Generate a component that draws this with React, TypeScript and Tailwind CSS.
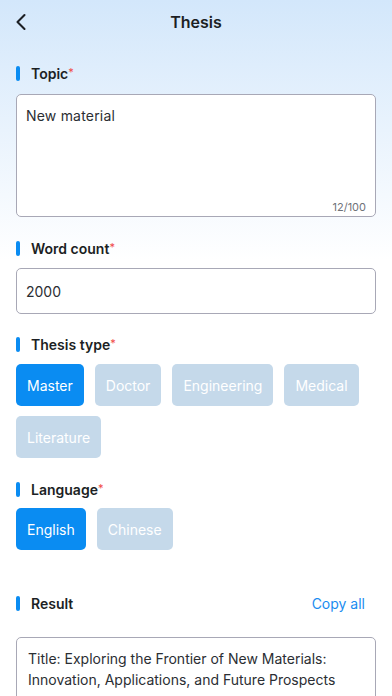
import { ChevronLeft } from "lucide-react";

const types = ["Master", "Doctor", "Engineering", "Medical", "Literature"];
const langs = ["English", "Chinese"];

function Label({ text, required }: { text: string; required?: boolean }) {
  return (
    <div className="flex items-center h-5">
      <span className="w-[4px] h-[15px] rounded-full bg-[#0a8cf2]" />
      <span className="ml-[11px] text-[14px] font-semibold text-[#1c1f24]">{text}</span>
      {required && <span className="text-[#f04848] text-[11px] self-start mt-[1px]">*</span>}
    </div>
  );
}

function Chip({ text, active }: { text: string; active?: boolean }) {
  return (
    <div
      className={
        "h-[42px] px-[11px] rounded-[5px] flex items-center text-[14px] " +
        (active ? "bg-[#0a8cf2] text-white" : "bg-[#c5d9ea] text-white")
      }
    >
      {text}
    </div>
  );
}

export default function App() {
  return (
    <div
      className="min-h-[696px] w-full text-[#1c1f24]"
      style={{ fontFamily: "Inter, 'Noto Sans', sans-serif", backgroundImage: "linear-gradient(to bottom, #d3e7fb 0px, #ffffff 260px, #ffffff 100%)" }}
    >
      <div className="relative h-[44px] flex items-center justify-center">
        <ChevronLeft className="absolute left-[7px] top-[8px] w-[28px] h-[28px]" strokeWidth={1.8} />
        <span className="text-[16px] font-semibold">Thesis</span>
      </div>

      <div className="px-4 pt-[19px]">
        <Label text="Topic" required />
        <div className="mt-[11px] h-[123px] bg-white border border-[#a8a8b6] rounded-[5px] relative px-[9px] pt-[10px]">
          <div className="text-[14px] text-[#2b2e33] tracking-[0.2px]">New material</div>
          <div className="absolute right-[9px] bottom-[1px] text-[11px] text-[#6f7278]">12/100</div>
        </div>

        <div className="mt-[21px]">
          <Label text="Word count" required />
        </div>
        <div className="mt-[10px] h-[46px] bg-white border border-[#a8a8b6] rounded-[5px] flex items-center px-[9px] text-[14px] text-[#2b2e33]">
          2000
        </div>

        <div className="mt-[20px]">
          <Label text="Thesis type" required />
        </div>
        <div className="mt-[10px] flex flex-wrap gap-x-[11px] gap-y-[10px]">
          {types.map((t, i) => (
            <Chip key={t} text={t} active={i === 0} />
          ))}
        </div>

        <div className="mt-[21px]">
          <Label text="Language" required />
        </div>
        <div className="mt-[9px] flex gap-[11px]">
          {langs.map((t, i) => (
            <Chip key={t} text={t} active={i === 0} />
          ))}
        </div>

        <div className="mt-[43px] flex items-center justify-between">
          <Label text="Result" />
          <span className="text-[14px] text-[#1a8cf0] mr-[11px]">Copy all</span>
        </div>
        <div className="mt-[23px] bg-white border border-[#a8a8b6] rounded-[5px] px-[11px] pt-[10px] pb-4 text-[14px] leading-[21px] text-[#2b2e33]">
          Title: Exploring the Frontier of New Materials: Innovation, Applications, and Future Prospects
        </div>
      </div>
    </div>
  );
}
